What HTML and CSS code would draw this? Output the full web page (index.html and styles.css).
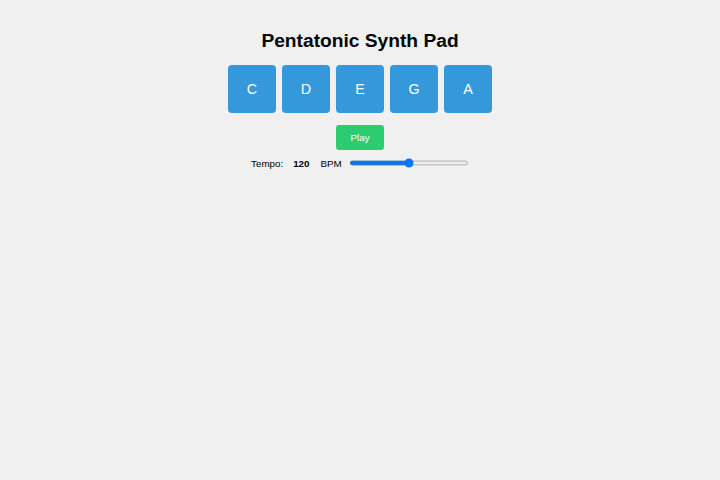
FILE: index.html
```html
<!DOCTYPE html>
<html lang="en">
<head>
  <meta charset="UTF-8" />
  <meta name="viewport" content="width=device-width, initial-scale=1.0" />
  <title>Pentatonic Synth Pad</title>
  <link rel="stylesheet" href="styles.css">
</head>
<body>

  <div class="synth">
    <h1>Pentatonic Synth Pad</h1>

    <div class="pads">
      <button class="pad">C</button>
      <button class="pad">D</button>
      <button class="pad">E</button>
      <button class="pad">G</button>
      <button class="pad">A</button>
    </div>

    <button class="play-btn">Play</button>

    <div class="tempo">
      <span class="tempo-label">Tempo:</span>
      <span class="tempo-value">120</span>
      <span class="tempo-unit">BPM</span>
      <input type="range" class="tempo-slider" min="60" max="180" value="120">
    </div>
  </div>

</body>
</html>
```

FILE: styles.css
```css
* {
  box-sizing: border-box;
}

body {
  margin: 0;
  font-family: 'Liberation Sans', Arial, sans-serif;
  background: #f0f0f0;
  color: #000;
}

.synth {
  display: flex;
  flex-direction: column;
  align-items: center;
  padding-top: 30px;
}

h1 {
  margin: 0 0 13px;
  font-size: 19.2px;
  line-height: 22px;
  font-weight: bold;
}

.pads {
  display: flex;
  gap: 6px;
  margin-bottom: 12px;
}

.pad {
  width: 48px;
  height: 48px;
  border: none;
  border-radius: 4px;
  background: #3498db;
  color: #fff;
  font-family: inherit;
  font-size: 14.4px;
  cursor: pointer;
  padding: 0;
}

.play-btn {
  width: 48px;
  height: 25px;
  border: none;
  border-radius: 3px;
  background: #2ecc71;
  color: #fff;
  font-family: inherit;
  font-size: 9.8px;
  padding: 0;
  cursor: pointer;
}

.tempo {
  display: flex;
  align-items: center;
  margin-top: 5px;
  font-size: 9.8px;
  height: 16px;
}

.tempo-value {
  font-weight: bold;
  margin: 0 11px 0 10px;
}

.tempo-slider {
  zoom: 0.6;
  width: 200px;
  margin: 0 0 0 12px;
}
```
